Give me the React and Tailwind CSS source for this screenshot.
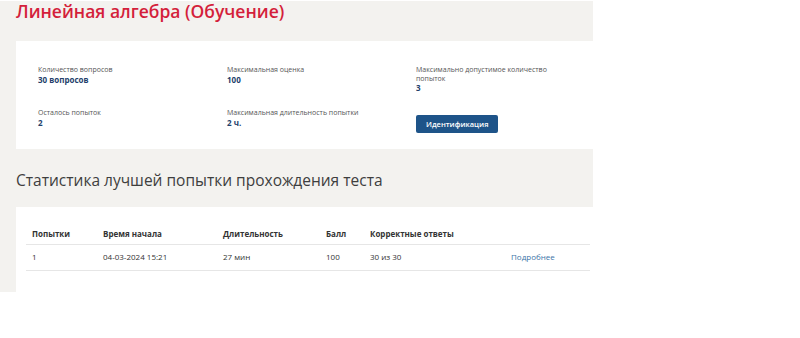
const info = [
  { label: 'Количество вопросов', value: '30 вопросов' },
  { label: 'Максимальная оценка', value: '100' },
  { label: 'Максимально допустимое количество попыток', value: '3' },
  { label: 'Осталось попыток', value: '2' },
  { label: 'Максимальная длительность попытки', value: '2 ч.' },
];

const cols = [
  { title: 'Попытки', w: 'w-[71px]' },
  { title: 'Время начала', w: 'w-[120px]' },
  { title: 'Длительность', w: 'w-[103px]' },
  { title: 'Балл', w: 'w-[44px]' },
  { title: 'Корректные ответы', w: 'w-[141px]' },
  { title: '', w: '' },
];

const row = ['1', '04-03-2024 15:21', '27 мин', '100', '30 из 30'];

const InfoItem = ({ label, value, wide }) => (
  <div className={wide ? 'w-[180px]' : 'w-[140px]'}>
    <div className="text-[7px] leading-[8.5px] text-[#555]">{label}</div>
    <div className="text-[8px] leading-[10px] font-bold text-[#23406b]">{value}</div>
  </div>
);

export default function App() {
  return (
    <div className="w-[800px] h-[338px] bg-white font-['Open_Sans',sans-serif]">
      <div className="w-[593px] h-[292px] bg-[#f3f2ef] pl-4 overflow-hidden border-t border-white">
        <h1 className="text-[17.5px] leading-[21px] font-semibold text-[#d41f3b]">
          Линейная алгебра (Обучение)
        </h1>

        {/* summary card */}
        <div className="mt-[19px] bg-white h-[108px] pl-[22px] pt-[25px]">
          <div className="grid grid-cols-[189px_189px_160px] gap-y-[16px]">
            <InfoItem {...info[0]} />
            <InfoItem {...info[1]} />
            <InfoItem {...info[2]} />
            <InfoItem {...info[3]} />
            <InfoItem {...info[4]} wide />
            <div>
              <button className="h-[18px] px-[10px] rounded-[2px] bg-[#1e5489] text-white text-[7.5px] font-semibold leading-[18px]">
                Идентификация
              </button>
            </div>
          </div>
        </div>

        <h2 className="mt-[21px] text-[15.5px] leading-[21px] text-[#3e3e3e]">
          Статистика лучшей попытки прохождения теста
        </h2>

        {/* stats card */}
        <div className="mt-[16px] bg-white h-[120px] pl-[10px] pr-[3px] pt-[18px]">
          <table className="w-[564px] text-[8px] text-[#333] border-collapse">
            <thead>
              <tr className="border-b border-[#e6e6e6]">
                {cols.map((c, i) => (
                  <th key={i} className={`${c.w} text-left font-bold pl-[6px] h-[19px] align-middle`}>
                    {c.title}
                  </th>
                ))}
              </tr>
            </thead>
            <tbody>
              <tr className="border-b border-[#e6e6e6]">
                {row.map((v, i) => (
                  <td key={i} className="pl-[6px] h-[26px] align-middle">{v}</td>
                ))}
                <td className="pl-[6px] h-[26px] align-middle text-[#3c73a8]">Подробнее</td>
              </tr>
            </tbody>
          </table>
        </div>
      </div>
    </div>
  );
}
